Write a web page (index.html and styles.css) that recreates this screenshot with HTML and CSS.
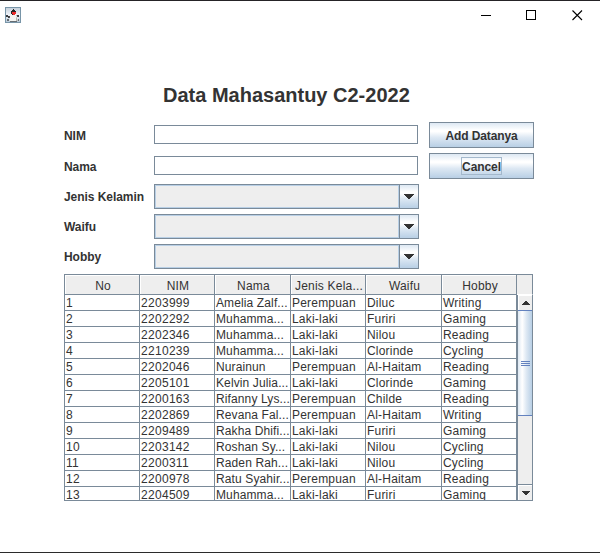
FILE: index.html
```
<!DOCTYPE html>
<html lang="id">
<head>
<meta charset="utf-8">
<title>Data Mahasantuy</title>
<link rel="stylesheet" href="styles.css">
</head>
<body>
<div class="window">
  <header class="titlebar">
    <svg class="app-icon" width="16" height="16" viewBox="0 0 16 16">
      <defs><linearGradient id="sky" x1="0" y1="0" x2="0" y2="1"><stop offset="0" stop-color="#c3cfda"/><stop offset=".5" stop-color="#f1f4fa"/><stop offset="1" stop-color="#b4c6d6"/></linearGradient></defs>
      <rect x=".5" y=".5" width="15" height="15" fill="url(#sky)" stroke="#7895a8"/>
      <path d="M1 8H3V9H5V11H3V10H1ZM11 8H14V10H12V9H11Z" fill="#3a3c40"/>
      <path d="M4.500 14L5 9.500L6 7H11L12.300 10L13 14Z" fill="#f4f4f2"/>
      <path d="M11 9L13 14H11Z" fill="#b4b3af"/>
      <path d="M8 2H9V3H10V4H11V7H10V8H7V7H6V4H7V3H8Z" fill="#262626"/>
      <path d="M2 12H4V14H2ZM5 14H12V15H5ZM13 12H14V14H13Z" fill="#666d72"/>
      <path d="M7 5H11V7H10V8H8V7H7Z" fill="#ee2c2c"/>
    </svg>
    <div class="controls">
      <svg width="46" height="29" shape-rendering="crispEdges"><path d="M18 14.500H28" stroke="#000"/></svg>
      <svg width="46" height="29" shape-rendering="crispEdges"><rect x="17.500" y="9.500" width="9" height="9" fill="none" stroke="#000"/></svg>
      <svg width="46" height="29"><path d="M17.500 9.500L27 19M27 9.500L17.500 19" stroke="#000" stroke-width="1.100"/></svg>
    </div>
  </header>
  <main class="content">
    <h1 class="title">Data Mahasantuy C2-2022</h1>
    <div class="form">
      <div class="row text-row"><label>NIM</label><div class="field"></div><button class="btn">Add Datanya</button></div>
      <div class="row text-row"><label>Nama</label><div class="field"></div><button class="btn btn-focused"><span class="focus">Cancel</span></button></div>
      <div class="row"><label>Jenis Kelamin</label><div class="combo"><i></i><b><svg width="10" height="5"><path d="M0 0H10V1H9V2H8V3H7V4H6V5H4V4H3V3H2V2H1V1H0Z" fill="#333"/></svg></b></div></div>
      <div class="row"><label>Waifu</label><div class="combo"><i></i><b><svg width="10" height="5"><path d="M0 0H10V1H9V2H8V3H7V4H6V5H4V4H3V3H2V2H1V1H0Z" fill="#333"/></svg></b></div></div>
      <div class="row"><label>Hobby</label><div class="combo"><i></i><b><svg width="10" height="5"><path d="M0 0H10V1H9V2H8V3H7V4H6V5H4V4H3V3H2V2H1V1H0Z" fill="#333"/></svg></b></div></div>
    </div>
    <div class="scrollpane">
      <div class="head"><span>No</span><span>NIM</span><span>Nama</span><span>Jenis Kela...</span><span>Waifu</span><span>Hobby</span><span class="corner"></span></div>
      <div class="view">
        <div class="rows">
          <div class="tr"><span>1</span><span>2203999</span><span>Amelia Zalf...</span><span>Perempuan</span><span>Diluc</span><span>Writing</span></div>
          <div class="tr"><span>2</span><span>2202292</span><span>Muhamma...</span><span>Laki-laki</span><span>Furiri</span><span>Gaming</span></div>
          <div class="tr"><span>3</span><span>2202346</span><span>Muhamma...</span><span>Laki-laki</span><span>Nilou</span><span>Reading</span></div>
          <div class="tr"><span>4</span><span>2210239</span><span>Muhamma...</span><span>Laki-laki</span><span>Clorinde</span><span>Cycling</span></div>
          <div class="tr"><span>5</span><span>2202046</span><span>Nurainun</span><span>Perempuan</span><span>Al-Haitam</span><span>Reading</span></div>
          <div class="tr"><span>6</span><span>2205101</span><span>Kelvin Julia...</span><span>Laki-laki</span><span>Clorinde</span><span>Gaming</span></div>
          <div class="tr"><span>7</span><span>2200163</span><span>Rifanny Lys...</span><span>Perempuan</span><span>Childe</span><span>Reading</span></div>
          <div class="tr"><span>8</span><span>2202869</span><span>Revana Fal...</span><span>Perempuan</span><span>Al-Haitam</span><span>Writing</span></div>
          <div class="tr"><span>9</span><span>2209489</span><span>Rakha Dhifi...</span><span>Laki-laki</span><span>Furiri</span><span>Gaming</span></div>
          <div class="tr"><span>10</span><span>2203142</span><span>Roshan Sy...</span><span>Laki-laki</span><span>Nilou</span><span>Cycling</span></div>
          <div class="tr"><span>11</span><span>2200311</span><span>Raden Rah...</span><span>Laki-laki</span><span>Nilou</span><span>Cycling</span></div>
          <div class="tr"><span>12</span><span>2200978</span><span>Ratu Syahir...</span><span>Perempuan</span><span>Al-Haitam</span><span>Reading</span></div>
          <div class="tr"><span>13</span><span>2204509</span><span>Muhamma...</span><span>Laki-laki</span><span>Furiri</span><span>Gaming</span></div>
        </div>
        <div class="scrollbar">
          <div class="arrow up"><svg width="8" height="4"><path d="M3 0H5V1H6V2H7V3H8V4H0V3H1V2H2V1H3Z" fill="#333"/></svg></div>
          <div class="thumb"><i></i><i></i><i></i></div>
          <div class="track"></div>
          <div class="arrow down"><svg width="8" height="4"><path d="M0 0H8V1H7V2H6V3H5V4H3V3H2V2H1V1H0Z" fill="#333"/></svg></div>
        </div>
      </div>
    </div>
  </main>
</div>
</body>
</html>
```
FILE: styles.css
```
* { box-sizing: border-box; }
body { margin: 0; background: #fff; color: #333; font: 12px/15px "Liberation Sans", Arial, sans-serif; overflow: hidden; }
svg { display: block; }
.window { height: 553px; border-top: 1px solid #252326; border-bottom: 1px solid #2b2b2b; }
.titlebar { display: flex; justify-content: space-between; height: 29px; padding: 6px 0 0 5px; }
.controls { display: flex; margin: -6px -1px 0 0; }
.content { padding: 53px 0 0 64px; }
.title { margin: 0 0 0 99px; height: 39px; font-size: 20px; line-height: 24px; font-weight: bold; white-space: nowrap; }
.form { display: flex; flex-direction: column; gap: 5px; height: 152px; }
.row { display: grid; grid-template-columns: 90px 265px 105px; height: 25px; align-items: center; }
.text-row { height: 26px; grid-template-columns: 90px 275px 105px; }
label { padding-top: 2px; font-weight: bold; letter-spacing: -.05px; white-space: nowrap; }
.field { width: 264px; height: 19px; border: 1px solid #7a8a99; margin-top: -1px; }
.btn { height: 26px; padding: 2px 0 0; border: 1px solid #7a8a99; border-radius: 0; color: #333; font: bold 12px/15px "Liberation Sans", Arial, sans-serif; letter-spacing: -.1px; background: linear-gradient(#dde8f3 0, #fff 30%, #fff 36%, #dde8f3 60%, #b8cfe5 100%); }
.btn-focused { padding: 0; }
.focus { display: inline-block; height: 18px; margin-top: -1px; line-height: 18px; border: 1px solid #a3b8cc; }
.combo { display: flex; height: 25px; border: 1px solid #7a8a99; }
.combo i { flex: 1; background: #eee; border: 1px solid #b8cfe5; }
.combo b { display: grid; place-items: center; width: 19px; border-left: 1px solid #7a8a99; background: linear-gradient(#dde8f3 0, #fff 30%, #fff 36%, #dde8f3 60%, #b8cfe5 100%); }
.scrollpane { width: 469px; height: 227px; border: 1px solid #7a8a99; border-bottom: 0; border-right: 0; letter-spacing: .2px; }
.head, .tr { display: grid; grid-template-columns: 75px 75px 76px 75px 76px 75px 16px; }
.head { height: 20px; background: #eee; line-height: 22px; text-align: center; }
.head span { height: 20px; border-right: 1px solid #7a8a99; border-bottom: 1px solid #7a8a99; box-shadow: inset 1px 1px #fff; padding-left: 2px; white-space: nowrap; }
.head .corner { border-bottom-color: #fff; box-shadow: none; }
.view { display: flex; height: 206px; }
.rows { width: 452px; overflow: hidden; border-bottom: 1px solid #7a8a99; }
.tr { grid-template-columns: 75px 75px 76px 75px 76px 75px; height: 16px; }
.tr span { height: 16px; border-right: 1px solid #7a8a99; border-bottom: 1px solid #7a8a99; padding-left: 1px; line-height: 16px; white-space: nowrap; overflow: hidden; }
.tr span:nth-child(-n+2) { letter-spacing: .3px; }
.tr span:nth-child(3) { letter-spacing: .12px; }
.scrollbar { display: flex; flex-direction: column; width: 16px; border: solid #7a8a99; border-width: 0 1px 1px; background: #eee; }
.arrow { display: grid; place-items: center; height: 15px; border-left: 1px solid #fff; border-top: 1px solid #fff; }
.thumb { height: 106px; border: 1px solid #6382bf; border-width: 1px 0 1px; background: linear-gradient(90deg, #dde8f3, #fff 30%, #dde8f3 60%, #b8cfe5); display: flex; flex-direction: column; align-items: center; justify-content: center; gap: 1px; }
.thumb i { width: 9px; height: 1px; background: #6382bf; }
.track { flex: 1; border-bottom: 1px solid #7a8a99; }
```
